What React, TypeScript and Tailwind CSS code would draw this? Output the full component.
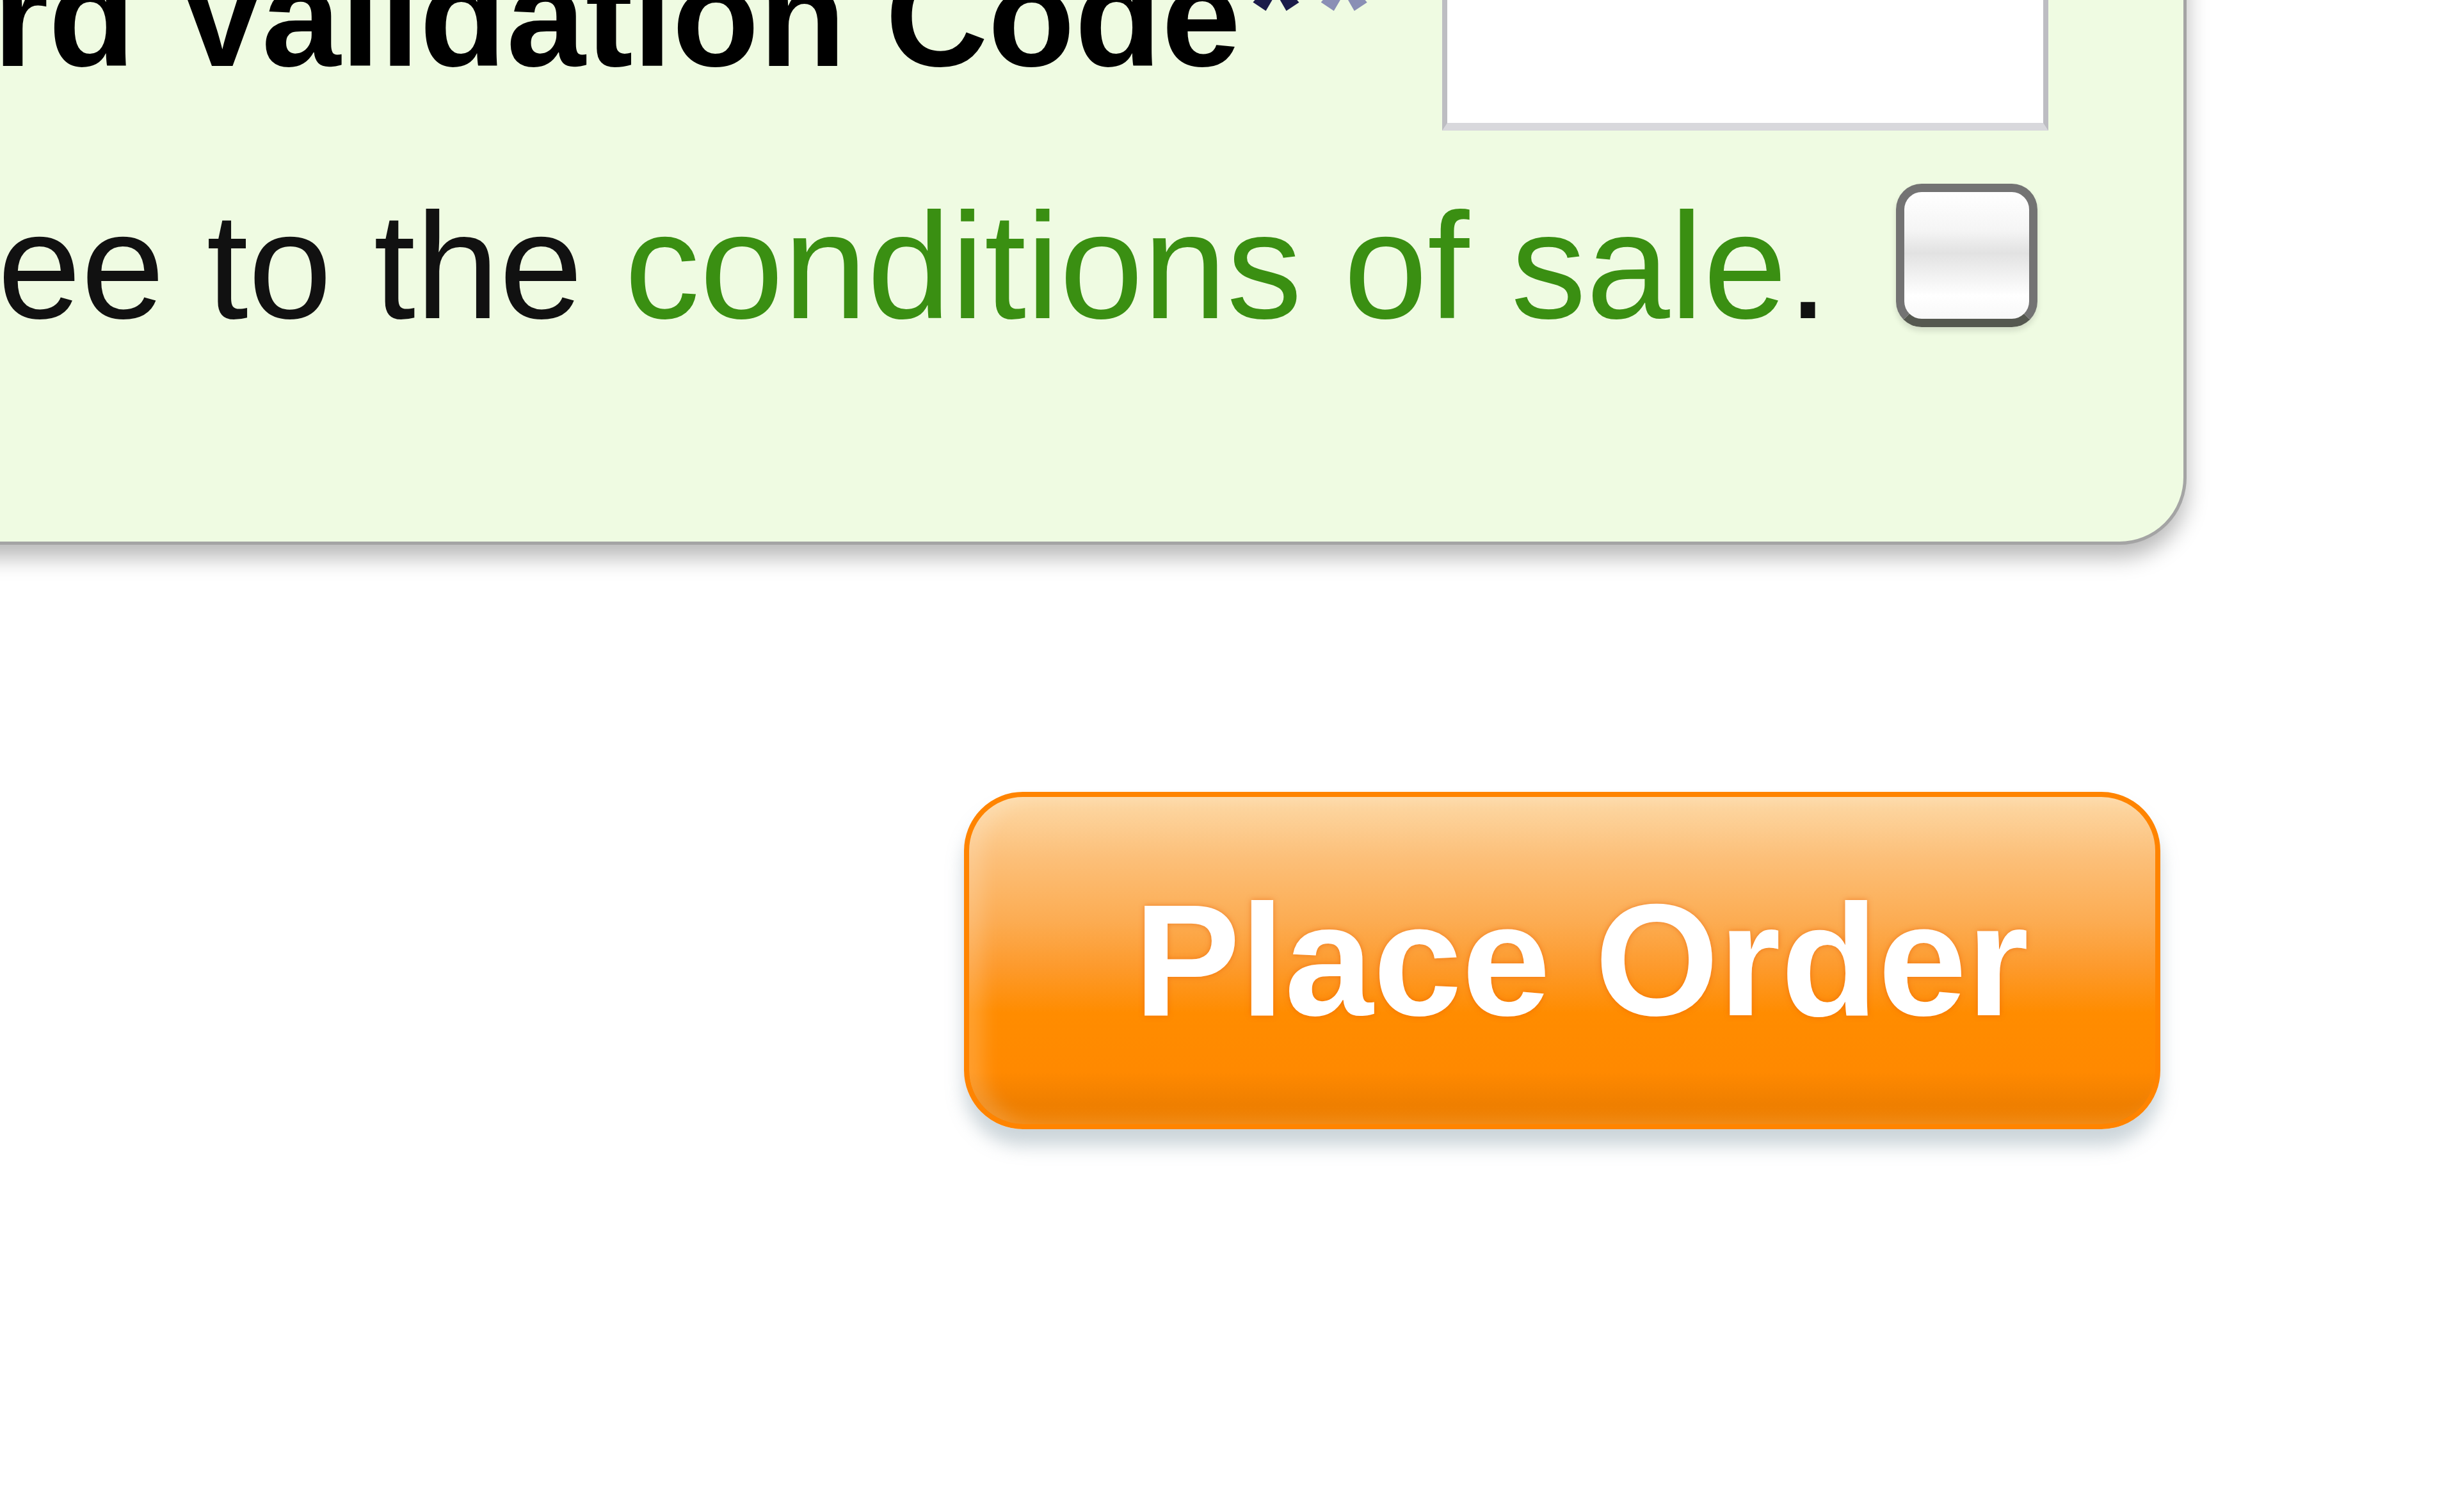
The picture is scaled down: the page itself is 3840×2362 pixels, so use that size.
import React from 'react';

const font = "font-['Liberation_Sans',Arial,Helvetica,sans-serif]";

export default function App() {
  return (
    <div className={`h-[2362px] w-[3840px] overflow-hidden bg-white ${font}`}>
      {/* Payment panel */}
      <div className="-mt-[140px] -ml-[200px] w-[3616px] rounded-[105px] border-[5px] border-[#a4a4a4] bg-[#effbe2] pt-[39px] pr-[211px] pb-[313px] shadow-[0_20px_34px_rgba(0,0,0,0.28)]">
        {/* Card validation code row */}
        <div className="flex items-end justify-end gap-[90px]">
          <label className="mb-[67px] h-[222px] shrink-0 whitespace-nowrap text-[222px] leading-none font-bold text-black">
            Card Validation Code
            <span className="relative -top-[16px] ml-[12px] tracking-[20px]">
              <span className="text-[#1b1b4a]">*</span>
              <span className="text-[#8a8fb5]">*</span>
            </span>
          </label>
          <input
            type="text"
            className="h-[300px] w-[947px] shrink-0 border-[8px] border-[#bdbdc2] border-b-[12px] border-b-[#d8d8dc] bg-white outline-none"
          />
        </div>

        {/* Conditions row */}
        <div className="mt-[83px] flex items-end justify-end gap-[105px]">
          <span className="h-[235px] shrink-0 whitespace-nowrap text-[235px] leading-none text-[#111]">
            I agree to the <a className="text-[#3a8f12]">conditions of sale</a>.
          </span>
          <div className="mr-[17px] mb-[22px] h-[224px] w-[221px] shrink-0 rounded-[40px] border-[13px] border-[#737373] border-b-[#555850] bg-[linear-gradient(to_bottom,#ffffff_0%,#f5f5f5_30%,#e2e2e2_48%,#eeeeee_62%,#ffffff_82%,#f8f8f8_100%)] shadow-[0_6px_10px_rgba(0,0,0,0.12)]" />
        </div>
      </div>

      {/* Submit */}
      <div className="mt-[386px] flex justify-end pr-[465px]">
        <button className="flex h-[527px] w-[1869px] items-center justify-center rounded-[92px] border-[8px] border-[#ff8400] bg-[linear-gradient(to_bottom,#fdd9a6_0%,#fcc07a_18%,#fcac52_38%,#fd9a2c_52%,#ff8c00_66%,#ff8900_84%,#ef7f00_94%,#f08000_100%)] pl-[60px] text-[249px] leading-none font-bold text-white shadow-[0_26px_28px_rgba(110,135,150,0.35),inset_22px_0_28px_rgba(255,255,255,0.18)] [text-shadow:0_0_8px_rgba(230,90,0,0.55)]">
          Place Order
        </button>
      </div>
    </div>
  );
}
